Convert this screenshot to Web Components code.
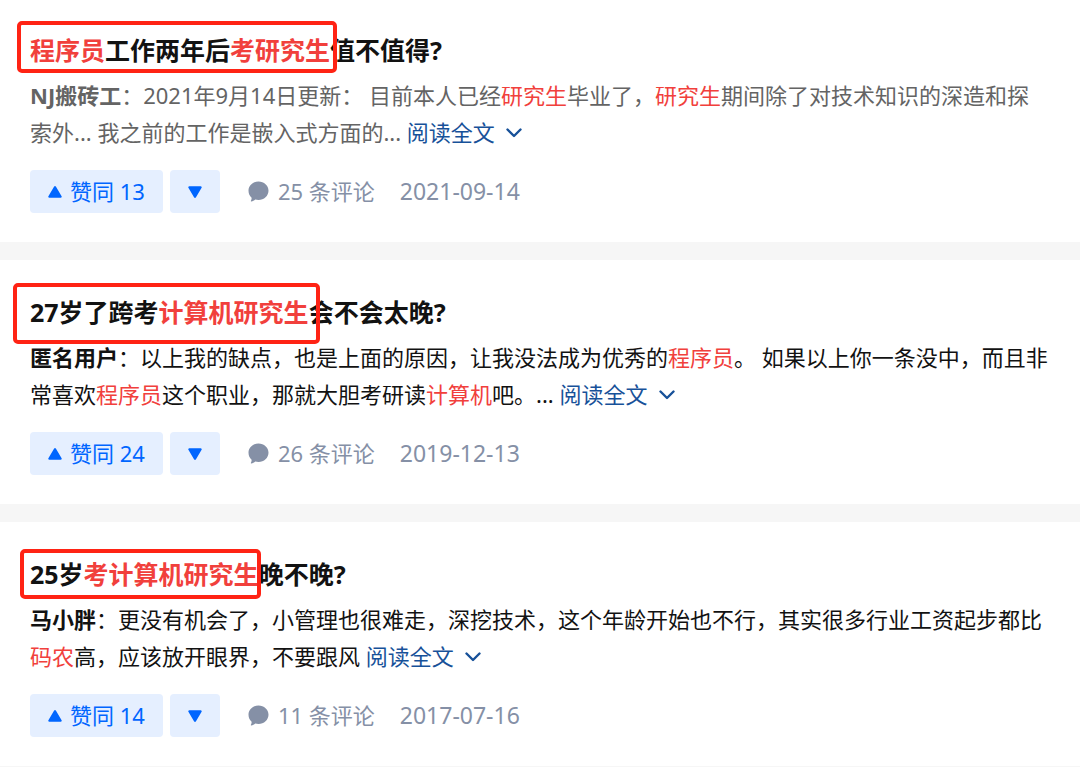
<!DOCTYPE html>
<html lang="zh-CN">
<head>
<meta charset="utf-8">
<meta name="viewport" content="width=device-width, initial-scale=1">
<title>搜索结果</title>
<style>
  body {
    margin: 0;
    background: #f6f6f6;
    color: #121212;
    font-family: "Noto Sans", "Noto Sans CJK SC", sans-serif;
    font-size: 22px;
  }
</style>
</head>
<body>
<result-list>
  <result-card tone="muted" first author="NJ搬砖工" votes="13" comments="25" date="2021-09-14"><span slot="title"><red-frame style="--inset: -9px -7px -3px -13px"><hit-word>程序员</hit-word>工作两年后<hit-word>考研究生</hit-word></red-frame>值不值得?</span>2021年9月14日更新： 目前本人已经<hit-word>研究生</hit-word>毕业了，<hit-word>研究生</hit-word>期间除了对技术知识的深造和探索外... 我之前的工作是嵌入式方面的...
  </result-card>
  <result-card author="匿名用户" votes="24" comments="26" date="2019-12-13"><span slot="title"><red-frame style="--inset: -9px -11px -12px -17px">27岁了跨考<hit-word>计算机研究生</hit-word></red-frame>会不会太晚?</span>以上我的缺点，也是上面的原因，让我没法成为优秀的<hit-word>程序员</hit-word>。 如果以上你一条没中，而且非常喜欢<hit-word>程序员</hit-word>这个职业，那就大胆考研读<hit-word>计算机</hit-word>吧。...
  </result-card>
  <result-card author="马小胖" votes="14" comments="11" date="2017-07-16"><span slot="title"><red-frame style="--inset: -5px -2px -5px -10px">25岁<hit-word>考计算机研究生</hit-word></red-frame>晚不晚?</span>更没有机会了，小管理也很难走，深挖技术，这个年龄开始也不行，其实很多行业工资起步都比<hit-word>码农</hit-word>高，应该放开眼界，不要跟风
  </result-card>
</result-list>

<script>
  function define(name, html, setup) {
    const template = document.createElement("template");
    template.innerHTML = html.trim();
    customElements.define(name, class extends HTMLElement {
      connectedCallback() {
        if (this.shadowRoot) return;
        const root = this.attachShadow({ mode: "open" });
        root.append(template.content.cloneNode(true));
        if (setup) setup(this, root);
      }
    });
  }

  define("result-list", `
    <style>
      :host { display: block; }
      main { display: flex; flex-direction: column; gap: 18px; }
    </style>
    <main><slot></slot></main>`);

  define("hit-word", `
    <style>:host { color: #f1403c; }</style><slot></slot>`);

  // Red outline drawn over the part of a title that it wraps.
  define("red-frame", `
    <style>
      :host { display: inline-block; position: relative; }
      i {
        position: absolute;
        inset: var(--inset);
        border: 4px solid #ff2314;
        border-radius: 5px;
        pointer-events: none;
      }
    </style><slot></slot><i></i>`);

  define("read-more", `
    <style>
      a { color: #175199; text-decoration: none; white-space: nowrap; }
      svg { width: 16px; height: 10px; margin-left: 11px; vertical-align: 3px; }
    </style><a href="#"><slot></slot><svg viewBox="0 0 16 10" aria-hidden="true"><path d="M1.5 1.5 8 8l6.500-6.500" fill="none" stroke="currentColor" stroke-width="2.400" stroke-linecap="round" stroke-linejoin="round"/></svg></a>`);

  define("vote-buttons", `
    <style>
      :host { display: flex; gap: 7px; }
      button {
        display: flex; align-items: center; justify-content: center; gap: 8px;
        height: 43px; padding: 0 18px; border: 0; border-radius: 4px;
        background: #e5efff; color: #06f; font: inherit; line-height: 43px; cursor: pointer;
      }
      svg { width: 14px; height: 12px; }
    </style>
    <button type="button"><svg viewBox="0 0 14 12" aria-hidden="true"><path d="M6 .8a1.200 1.200 0 0 1 2 0l5.600 9.400a1 1 0 0 1-.9 1.500H1.300a1 1 0 0 1-.9-1.500z" fill="currentColor"/></svg><span id="label"></span></button>
    <button type="button" aria-label="反对"><svg viewBox="0 0 14 12" aria-hidden="true"><path d="M6 11.200a1.200 1.200 0 0 0 2 0l5.600-9.400A1 1 0 0 0 12.700.3H1.300a1 1 0 0 0-.9 1.500z" fill="currentColor"/></svg></button>`,
    (host, root) => {
      root.getElementById("label").textContent = "赞同 " + host.getAttribute("count");
    });

  define("comment-button", `
    <style>
      button {
        display: flex; align-items: center; gap: 9px; padding: 0; border: 0;
        background: none; color: inherit; font: inherit; line-height: 43px; cursor: pointer;
      }
      svg { width: 21px; height: 21px; }
    </style>
    <button type="button"><svg viewBox="0 0 21 21" aria-hidden="true"><path d="M10.500.5C16 .5 20.500 4.600 20.500 9.700S16 19 10.500 19c-1.100 0-2.200-.2-3.200-.5-1.200.9-2.500 1.700-4 1.900-.5.1-.7-.4-.4-.7.6-.7.8-1.900.7-3C1.700 15 .5 12.500.5 9.700.5 4.600 5 .5 10.500.5z" fill="currentColor"/></svg><span id="label"></span></button>`,
    (host, root) => {
      root.getElementById("label").textContent = host.getAttribute("count") + " 条评论";
    });

  define("result-card", `
    <style>
      :host { display: block; padding: 32px 30px 29px; background: #fff; }
      :host([first]) { padding-top: 30px; }
      h2 { margin: 0 0 7px; font-size: 25px; line-height: 40px; font-weight: 700; }
      h2 a { color: inherit; text-decoration: none; }
      p { margin: 0 0 19px; line-height: 37px; }
      :host([tone="muted"]) p { color: #646464; }
      footer { display: flex; align-items: center; color: #8590a6; }
      comment-button { margin: 0 25px 0 28px; }
      time { font-size: 23px; line-height: 43px; }
    </style>
    <article>
      <h2><a href="#"><slot name="title"></slot></a></h2>
      <p><b></b>：<slot></slot><read-more>阅读全文</read-more></p>
      <footer></footer>
    </article>`,
    (host, root) => {
      root.querySelector("b").textContent = host.getAttribute("author");
      const footer = root.querySelector("footer");
      const votes = document.createElement("vote-buttons");
      votes.setAttribute("count", host.getAttribute("votes"));
      const comments = document.createElement("comment-button");
      comments.setAttribute("count", host.getAttribute("comments"));
      const time = document.createElement("time");
      time.dateTime = time.textContent = host.getAttribute("date");
      footer.append(votes, comments, time);
    });
</script>
</body>
</html>
